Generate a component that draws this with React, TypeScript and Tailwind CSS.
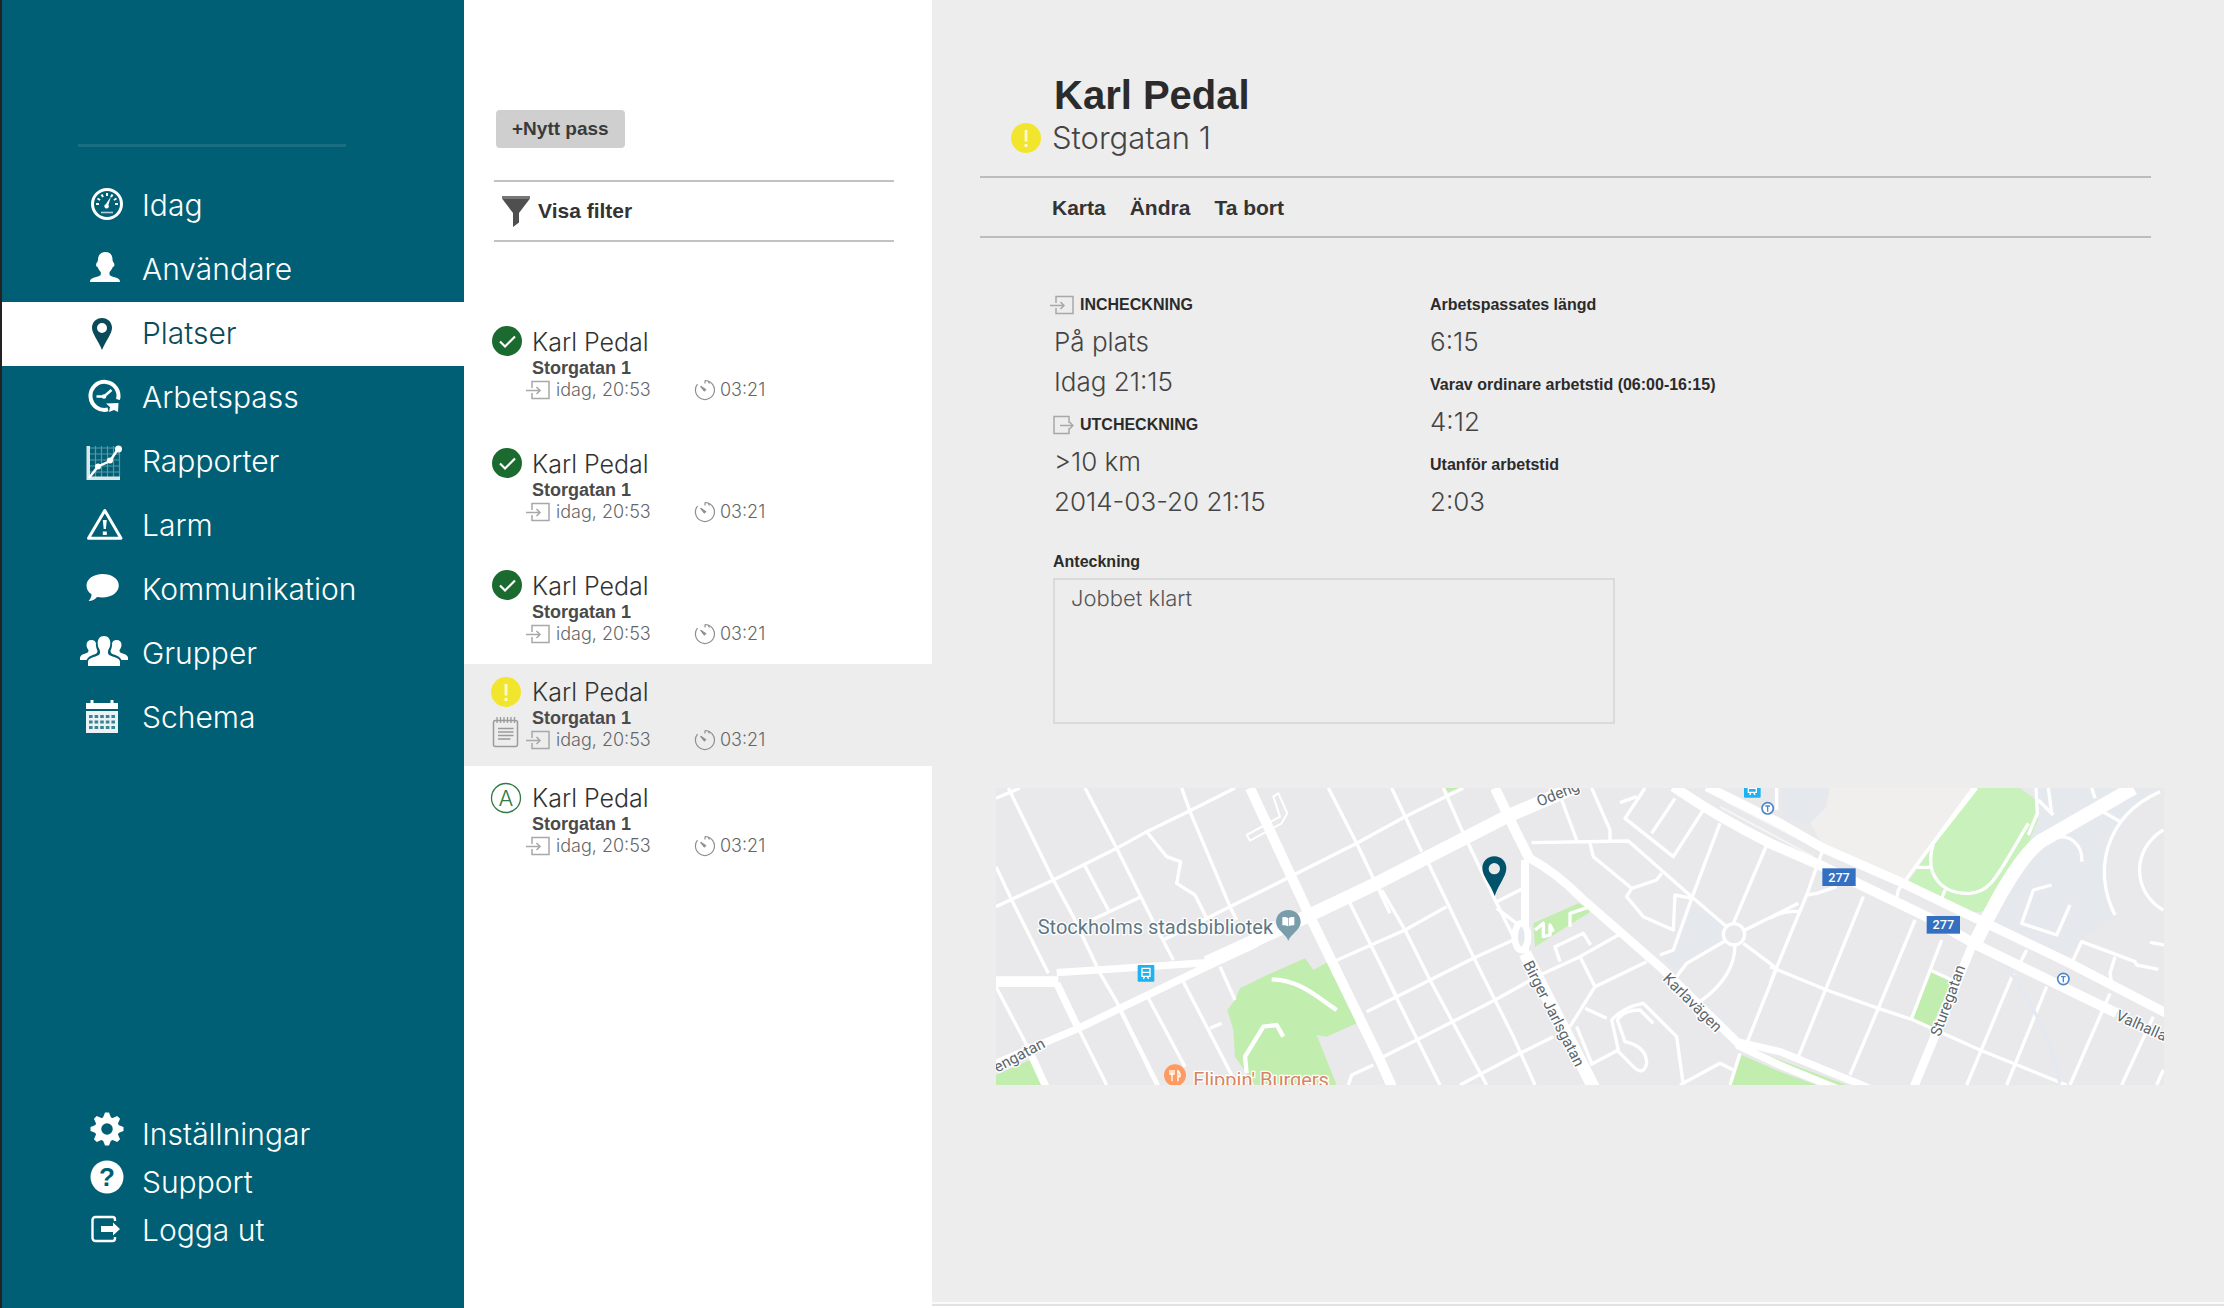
import { useState, type ReactNode } from "react";
import clsx from "clsx";

type Status = "done" | "alert" | "auto";

interface Shift {
  id: number;
  name: string;
  place: string;
  checkIn: string;
  duration: string;
  status: Status;
  hasNote?: boolean;
  spacing: string;
}

const shifts: Shift[] = [
  { id: 1, name: "Karl Pedal", place: "Storgatan 1", checkIn: "idag, 20:53", duration: "03:21", status: "done", spacing: "" },
  { id: 2, name: "Karl Pedal", place: "Storgatan 1", checkIn: "idag, 20:53", duration: "03:21", status: "done", spacing: "mt-5" },
  { id: 3, name: "Karl Pedal", place: "Storgatan 1", checkIn: "idag, 20:53", duration: "03:21", status: "done", spacing: "mt-5" },
  { id: 4, name: "Karl Pedal", place: "Storgatan 1", checkIn: "idag, 20:53", duration: "03:21", status: "alert", hasNote: true, spacing: "mt-1" },
  { id: 5, name: "Karl Pedal", place: "Storgatan 1", checkIn: "idag, 20:53", duration: "03:21", status: "auto", spacing: "mt-1" },
];

function NavIcon({ children }: { children: ReactNode }) {
  return (
    <svg viewBox="0 0 48 48" className="size-12 shrink-0" fill="currentColor" aria-hidden="true">
      {children}
    </svg>
  );
}

const gaugeTicks = [-90, -60, -30, 0, 30, 60, 90];

const mainNav = [
  {
    label: "Idag",
    icon: (
      <NavIcon>
        <circle cx="27" cy="22" r="14.5" fill="none" stroke="currentColor" strokeWidth="3" />
        {gaugeTicks.map((a) => (
          <rect key={a} x="26" y="11" width="2" height="3" transform={`rotate(${a} 27 22)`} />
        ))}
        <path d="M31 14.5 28.4 23a2.2 2.2 0 1 1-2.6-.8z" />
        <path d="M21 30.5h12" stroke="currentColor" strokeWidth="1.6" opacity=".7" />
      </NavIcon>
    ),
  },
  {
    label: "Användare",
    icon: (
      <NavIcon>
        <path d="M25.500 6c4.400 0 7 3 7 7.500 0 1.200.200 2 1.400 3.400.900 1.300.700 3.700-1.100 4-1 2.400-2.300 4-3.300 5v2.300c0 1.400 1.500 2 4.500 2.800 3.600 1 6 2 6 5H10c0-3 2.400-4 6-5 3-.8 4.800-1.400 4.800-2.800v-2.300c-1-1-2.300-2.600-3.200-5-1.700-.3-1.900-2.700-1-4 1.200-1.400 1.400-2.200 1.400-3.400 0-4.500 3-7.500 7.500-7.500z" />
      </NavIcon>
    ),
  },
  {
    label: "Platser",
    icon: (
      <NavIcon>
        <path
          fillRule="evenodd"
          d="M22 8c-5.800 0-10 4.300-10 9.800C12 24 18 30 22 40c4-10 10-16 10-22.200C32 12.300 27.800 8 22 8zm0 5a5 5 0 1 1 0 10 5 5 0 0 1 0-10z"
        />
      </NavIcon>
    ),
  },
  {
    label: "Arbetspass",
    icon: (
      <NavIcon>
        <path d="M38 25.500A14 14 0 1 0 28 35.400" fill="none" stroke="currentColor" strokeWidth="4" />
        <path d="M26 29.500 38.500 29 38 38 34 36 29 38 30 33z" />
        <path d="M16.500 22.500H24l7.500-6.500" fill="none" stroke="currentColor" strokeWidth="2.600" />
        <circle cx="24" cy="22.500" r="2.300" />
      </NavIcon>
    ),
  },
  {
    label: "Rapporter",
    icon: (
      <NavIcon>
        <path
          d="M15.500 8v31M21.500 8v31M27.500 8v31M33.500 8v31M39.500 12v27M9 10h31M9 16h31M9 22h31M9 28h31M9 34h31"
          stroke="currentColor"
          strokeWidth="1.200"
          opacity=".35"
        />
        <path d="M6.500 8v34H40v-3.500H10V8z" opacity=".85" />
        <path d="M9 40 18 28.500 30 23 38 11" fill="none" stroke="currentColor" strokeWidth="2.400" />
        <circle cx="18" cy="28.500" r="3" />
        <circle cx="30" cy="22.500" r="3" />
        <circle cx="38.500" cy="11" r="3.500" />
      </NavIcon>
    ),
  },
  {
    label: "Larm",
    icon: (
      <NavIcon>
        <path d="M24.800 8.500 41 36.200H8.500z" fill="none" stroke="currentColor" strokeWidth="3" strokeLinejoin="round" />
        <path d="M22.800 18h4l-.9 9h-2.200zM22.800 29.500h4v3.500h-4z" />
      </NavIcon>
    ),
  },
  {
    label: "Kommunikation",
    icon: (
      <NavIcon>
        <path d="M22.500 8C13.500 8 6.500 13 6.500 19.500c0 4 2 6.800 5 8.800 0 2.700-1 4.700-3 6.700 3.500 0 6.500-1.500 8.500-4 1.700.3 3.500.500 5.500.500 9 0 16.300-5 16.300-12S31.500 8 22.500 8z" />
      </NavIcon>
    ),
  },
  {
    label: "Grupper",
    icon: (
      <NavIcon>
        <path d="M24 6c4 0 6.300 2.800 6.300 7 0 2-.3 4-1.300 5.600-.8 1.300-1 2.400-1 3.700 0 2.200 1 3 4.500 4.200C37 28 40 29 40 32v4H8v-4c0-3 3-4 7.500-5.500C19 25.300 20 24.500 20 22.300c0-1.300-.2-2.400-1-3.700-1-1.600-1.300-3.600-1.300-5.600 0-4.200 2.300-7 6.300-7z" />
        <path d="M11.500 10c2.300 0 3.900 1 4.400 3-.2 3.300.7 6 1.600 8-.2 2-1 2.700-3.500 3.600-3.500 1.200-6 2.400-7.500 5.400H0v-2.500C.500 25 3 24.500 6 23.300c2-.8 2.700-1.600 2.500-3.300-1.400-1.700-2-3.500-2-5.300 0-3 2-4.700 5-4.700z" />
        <path d="M36.500 10c-2.300 0-3.900 1-4.400 3 .2 3.300-.7 6-1.600 8 .2 2 1 2.700 3.500 3.600 3.500 1.200 6 2.400 7.500 5.400H48v-2.500c-.5-2.500-3-3-6-4.200-2-.8-2.700-1.600-2.500-3.300 1.400-1.700 2-3.500 2-5.300 0-3-2-4.700-5-4.700z" />
      </NavIcon>
    ),
  },
  {
    label: "Schema",
    icon: (
      <NavIcon>
        <path d="M10.500 6h3v5h-3zM30.500 6h3v5h-3z" />
        <path d="M6 9h32v6H6z" />
        <path d="M6 17h32v22H6z" opacity=".92" />
        <path
          d="M9 22.500h26M9 28h26M9 33.500h26"
          stroke="#005f74"
          strokeWidth="3.200"
          strokeDasharray="3.600 2"
          opacity=".75"
        />
      </NavIcon>
    ),
  },
];

const gearTeeth = [0, 45, 90, 135, 180, 225, 270, 315];

const footerNav = [
  {
    label: "Inställningar",
    icon: (
      <NavIcon>
        {gearTeeth.map((a) => (
          <path key={a} d="M22.500 9 25 2.500h4L31.500 9z" transform={`rotate(${a} 27 19)`} />
        ))}
        <circle cx="27" cy="19" r="9" fill="none" stroke="currentColor" strokeWidth="6.500" />
      </NavIcon>
    ),
  },
  {
    label: "Support",
    icon: (
      <NavIcon>
        <circle cx="27" cy="19" r="16.500" />
        <text x="27" y="28" textAnchor="middle" fill="#005f74" className="font-['Liberation_Sans',sans-serif] text-[26px] font-bold">
          ?
        </text>
      </NavIcon>
    ),
  },
  {
    label: "Logga ut",
    icon: (
      <NavIcon>
        <path
          d="M35 15v-1.500a2.500 2.500 0 0 0-2.500-2.500h-17a3 3 0 0 0-3 3v18a3 3 0 0 0 3 3h17a2.500 2.500 0 0 0 2.500-2.500V31"
          fill="none"
          stroke="currentColor"
          strokeWidth="2.400"
        />
        <path d="M21 20h12v-3.500l7 6.500-7 6.500V26H21z" />
      </NavIcon>
    ),
  },
];

function CheckInIcon() {
  return (
    <svg viewBox="0 0 24 20" className="h-5 w-6 shrink-0 text-[#a8a8a8]" fill="none" stroke="currentColor" strokeWidth="1.500" aria-hidden="true">
      <path d="M6 8V1.500h17v17H6V13M0 10.500h14M10.500 7l3.500 3.500L10.500 14" />
    </svg>
  );
}

function CheckOutIcon() {
  return (
    <svg viewBox="0 0 24 20" className="h-5 w-6 shrink-0 text-[#a8a8a8]" fill="none" stroke="currentColor" strokeWidth="1.500" aria-hidden="true">
      <path d="M19 8V1.500H4v17h15V13M10 10.500h13M19.500 7l3.500 3.500-3.500 3.500" />
    </svg>
  );
}

function TimerIcon() {
  return (
    <svg viewBox="0 0 22 22" className="size-[22px] shrink-0 text-[#8f8f8f]" fill="none" stroke="currentColor" strokeWidth="1.200" aria-hidden="true">
      <path d="M11 1.500v3M11 1.500a9.500 9.500 0 1 1-7.500 3.600M14 2l1.500 2.500M10.800 11.800 6.500 7.200" />
      <path d="M7 7.500l4.600 3-1.300 1.300z" fill="currentColor" />
    </svg>
  );
}

function NoteIcon() {
  return (
    <svg viewBox="0 0 28 32" className="h-8 w-7" fill="none" stroke="#9b9b9b" strokeWidth="1.500" aria-hidden="true">
      <rect x="1.500" y="4.500" width="24" height="26" rx="2" />
      <path d="M5 1v6M8.500 1v6M12 1v6M15.500 1v6M19 1v6M22.500 1v6" strokeWidth="1.300" />
      <path d="M6 12.500h15.500M6 16h15.500M6 19.500h15.500M6 23h12.500" strokeWidth="1.600" />
    </svg>
  );
}

function StatusBadge({ status }: { status: Status }) {
  return (
    <svg viewBox="0 0 32 32" className="size-8 shrink-0" fill="none" aria-hidden="true">
      {status === "done" && (
        <>
          <circle cx="17" cy="15" r="15" fill="#1b6a2f" />
          <path d="M10 15.500l5 5L25 10.500" stroke="#fff" strokeWidth="2.200" />
        </>
      )}
      {status === "alert" && (
        <>
          <circle cx="16" cy="16" r="15" fill="#f2e52d" />
          <path d="M16 8v11.500M16 22v3" stroke="#fffbd0" strokeWidth="2.800" />
        </>
      )}
      {status === "auto" && (
        <>
          <circle cx="16" cy="16" r="14.500" stroke="#2f7a45" strokeWidth="1.300" />
          <text x="16" y="24" textAnchor="middle" fill="#2f7a45" className="font-['Inter',sans-serif] text-[22px] font-light">
            A
          </text>
        </>
      )}
    </svg>
  );
}

function ShiftRow({ shift, selected, onSelect }: { shift: Shift; selected: boolean; onSelect: () => void }) {
  return (
    <li className={shift.spacing}>
      <button
        type="button"
        onClick={onSelect}
        className={clsx("flex w-full gap-2.5 pt-3 pb-3.5 pl-[26px] text-left", selected && "bg-[#ededed]")}
      >
        <span className="flex w-8 flex-col items-center gap-2">
          <StatusBadge status={shift.status} />
          {shift.hasNote && <NoteIcon />}
        </span>
        <span className="flex flex-col">
          <span className="font-['Inter',sans-serif] text-[25px] leading-8 font-light text-[#333]">{shift.name}</span>
          <span className="text-lg leading-5 font-bold text-[#4a4a4a]">{shift.place}</span>
          <span className="-ml-1.5 flex h-6 items-center font-['Inter',sans-serif] text-lg leading-6 font-light text-[#666]">
            <CheckInIcon />
            <span className="ml-1.5 w-[138px]">{shift.checkIn}</span>
            <TimerIcon />
            <span className="ml-1">{shift.duration}</span>
          </span>
        </span>
      </button>
    </li>
  );
}

function Field({ label, icon, values }: { label: string; icon?: ReactNode; values: string[] }) {
  return (
    <div>
      <dt className="flex h-9 items-center pt-0.5 text-base font-bold text-[#2b2b2b]">
        {icon && <span className="mr-1.5 -ml-1 w-6">{icon}</span>}
        {label}
      </dt>
      {values.map((v) => (
        <dd key={v} className="font-['Inter',sans-serif] text-[26px] leading-10 font-light text-[#444]">
          {v}
        </dd>
      ))}
    </div>
  );
}

function CityMap() {
  return (
    <svg
      viewBox="18 24 3504 891"
      preserveAspectRatio="xMidYMid slice"
      className="block h-[297px] w-full bg-[#e9e9eb] font-['Roboto',sans-serif]"
      fill="none"
      stroke="#fff"
      role="img"
      aria-label="Karta"
    >
      {/* areas */}
      <g stroke="none">
        <g fill="#c1edae">
          <path d="M820 590 945 535 970 570 1015 545 1100 730 1010 770 980 765 1040 915H795L735 830 730 750 712 690 735 660 750 625z" />
          <path d="M18 885 120 840 155 915H18z" />
          <path d="M1630 430 1765 370 1810 390 1730 440 1635 500z" />
          <path d="M1365 24H1410L1375 36z" />
          <path d="M2255 825 2370 875 2480 915H2225zM2270 803 2570 915H2530L2340 845z" />
          <path d="M2825 572 2885 600 2825 742 2765 715z" />
          <path d="M3310 24H3370L3318 42z" />
        </g>
        <g fill="#e5e9ed">
          <path d="M2110 370 2200 430V490L2060 570 2010 530 2050 510z" />
          <path d="M2380 24H2520L2500 100 2460 135 2380 115z" />
          <path d="M3100 200 3140 140 3140 24H3510C3380 80 3320 240 3375 410L3270 480 3230 545 3000 430 3050 290z" />
        </g>
        <path fill="#f0efee" d="M2520 24H2950L2740 310 2500 200 2460 130 2510 80z" />
        <path fill="#c8f1bb" d="M2950 24H3090L3138 60 3145 120 3115 190 3020 340 2985 392Q2950 402 2925 392L2755 305z" />
      </g>

      {/* small streets */}
      <g strokeWidth="10" strokeLinejoin="round">
        <path d="M55 24 190 300 250 410 330 580 380 665 505 915M18 260 65 360 175 580M18 620 110 795M285 24 380 205 490 425 550 540M580 605 725 885M470 645 585 860M575 24 600 95 720 380 740 420M1015 24 1100 190 1200 400" />
        <path d="M18 380 190 300 380 205 470 155 600 92 735 24M18 55 90 24M520 480 720 380 905 288 1100 190 1245 110 1420 24M470 155 530 230 572 245 560 310 615 345 648 410M285 258 355 390M310 418 450 352" />
        <path d="M1080 370 1220 650M1030 545 1245 450 1370 380M1130 695 1320 600 1450 535 1570 480M1075 915 1085 885 1150 855M690 560 735 660M660 745 695 730" />
        <path d="M1205 24 1295 215M1315 250 1450 530 1570 770 1635 915M1360 24 1420 160 1520 370 1570 470M1175 330 1245 450 1320 600 1490 915M1180 570 1220 655 1350 915" />
        <path d="M1180 830 1280 780 1515 660 1650 585 1770 530 1885 465M1410 915 1590 820 1690 770M1520 365 1600 325M1520 385 1580 430" />
        <path d="M1715 60 1760 180M1805 24 1860 150V180M1625 188 1915 183 2105 350 2210 440M1800 190 1810 230 1925 325 1910 350 1960 410 2050 450 2055 345 2105 355M1925 325 2000 300 2015 280" />
        <path d="M1965 24 1905 115 2050 230 2140 90M2055 55 1985 160M1890 68 1940 50M2190 130 2105 355 2050 510 2010 525M2330 195 2230 430M2265 450 2425 370M2260 490 2360 565 2270 790M2210 480 2090 550 2060 590M2235 495Q2235 590 2130 665" />
        <path d="M1770 530 1815 620 1970 545M1815 620 1740 740M1785 685 1850 715M1710 545 1695 500 1780 460 1802 495M1800 855 1885 810 1865 720Q1900 680 1960 670L2060 770 2080 915M1990 730 1950 690Q1900 690 1882 720L1905 785Q1970 800 1970 850 1960 890 1930 860L1885 815" />
        <path d="M2070 915 2190 850 2230 870M2250 820 2220 915M1760 740 1805 850" />
        <path d="M2500 205 2450 345 2340 610M2450 345 2480 340 2540 320M2340 415Q2380 390 2425 395M2620 350 2425 830M2775 420 2665 685 2580 885M2855 480 2765 715M2340 560 2510 630 2665 685 2770 720 2970 810 3230 915" />
        <path d="M3070 580 2930 915M3170 620 3050 915M3110 510 3090 550M3360 640 3240 915M3490 710 3395 915M3520 870 3500 915M3245 550 3275 485 3435 545 3440 555 3505 568M3375 530 3360 580 3365 610M3480 487 3525 495" />
        <path d="M3510 35C3340 110 3310 280 3375 405M3520 150C3420 210 3430 340 3520 390M3185 315 3130 330 3095 430 3200 465 3240 375M3180 180C3240 150 3280 200 3275 245M3305 24 3315 55M3175 24 3185 100M3330 90 3390 125M2825 572 2885 600" />
        <path d="M2950 24 2725 330 2720 355M2960 24 2830 190C2800 290 2860 340 2930 340 3000 345 3020 290 3115 130M3138 24 3142 100 3115 165M2780 262H2820M2865 330 2855 355M3145 60 3190 105" />
        <path d="M1635 450 1660 430 1660 470 1680 465 1680 435 1690 455M1740 440 1740 400 1800 380M2360 24V90" />
        <path d="M845 598C930 600 980 650 1040 690M770 880 765 830 820 740 860 735 880 770" strokeWidth="13" />
        <path d="M850 50 865 40 892 100 875 130 780 182 770 165 870 110z" strokeWidth="6" />
        <circle cx="2232" cy="463" r="32" fill="#e9e9eb" />
      </g>
      <path d="M3000 500Q3170 700 3210 910" stroke="#e4e8f1" strokeWidth="10" />
      <path d="M2190 80 2470 230M2200 60 2480 205M2210 110 2460 240" stroke="#f6f6f8" strokeWidth="5" />

      {/* main roads */}
      <g strokeLinejoin="round">
        <path d="M780 24 960 410 1170 840 1210 930" strokeWidth="30" />
        <path d="M650 548 960 405 1170 305 1550 110 1750 24" strokeWidth="40" />
        <path d="M18 605H205" strokeWidth="32" />
        <path d="M200 578 430 563 650 548M18 850 265 745 650 560 800 490M200 610 265 745M110 795 170 925" strokeWidth="22" />
        <path d="M265 745 350 915M390 690 500 915" strokeWidth="10" />
        <path d="M1515 24 1570 140 1620 240" strokeWidth="30" />
        <path d="M1605 240V520" strokeWidth="24" />
        <ellipse cx="1594" cy="470" rx="20" ry="40" strokeWidth="20" fill="#e3e8ec" />
        <path d="M1605 520 1820 940" strokeWidth="38" />
        <path d="M1620 235Q1700 280 1770 350L2010 560 2250 795" strokeWidth="26" />
        <path d="M2240 795 2380 860 2540 925M2240 785 2370 815 2640 925" strokeWidth="22" />
        <path d="M2050 20Q2180 110 2340 190L2500 260 2810 410 2960 495 3380 700" strokeWidth="30" />
        <path d="M2150 20 2370 130 2500 205 2740 310 3000 435 3240 550 3530 700" strokeWidth="28" />
        <path d="M3430 24 3150 185Q3080 240 2980 440L2960 480" strokeWidth="42" />
        <path d="M2945 500 2900 610 2770 925" strokeWidth="26" />
      </g>

      {/* labels */}
      <g stroke="#fff" strokeWidth="8" paintOrder="stroke" fill="#5c666c" fontSize="46">
        <text x="143" y="461" fontSize="60" fill="#5f7885">
          Stockholms stadsbibliotek
        </text>
        <text x="610" y="921" fontSize="60" fill="#d78461">
          Flippin' Burgers
        </text>
        <text transform="translate(22 878) rotate(-28)">engatan</text>
        <text transform="translate(1648 80) rotate(-22)">Odeng</text>
        <text transform="translate(1598 552) rotate(63)">Birger Jarlsgatan</text>
        <text transform="translate(2016 598) rotate(45)">Karlavägen</text>
        <text transform="translate(2850 772) rotate(-70)">Sturegatan</text>
        <text transform="translate(3374 718) rotate(24)">Valhalla</text>
      </g>

      <g stroke="none">
        <path fill="#7a9dac" d="M895 390c-22 0-37 16-37 36 0 24 28 34 37 56 9-22 37-32 37-56 0-20-15-36-37-36z" />
        <path fill="#fff" d="M877 412q9-3 17 2v25q-8-5-17-3zM913 412q-9-3-17 2v25q8-5 17-3z" />
        <circle cx="555" cy="886" r="33" fill="#ff9b62" />
        <path d="M546 870v34M564 870v34M540 870v12h12v-12M562 872q10 4 8 18h-6" stroke="#fff" strokeWidth="4" />
        {[
          [443, 555],
          [2262, 3],
        ].map(([x, y]) => (
          <g key={x}>
            <rect x={x} y={y} width="50" height="50" rx="3" fill="#1cb3f0" />
            <path d={`M${x + 13} ${y + 10}h24v24h-24zM${x + 13} ${y + 22}h24M${x + 17} ${y + 42}l4-8M${x + 33} ${y + 42}l-4-8`} stroke="#fff" strokeWidth="4" />
          </g>
        ))}
        {[
          [2333, 85],
          [3220, 597],
        ].map(([x, y]) => (
          <g key={x}>
            <circle cx={x} cy={y} r="17" fill="#fff" stroke="#4d86c9" strokeWidth="5" />
            <path d={`M${x - 7} ${y - 7}h14M${x} ${y - 7}v17`} stroke="#4d86c9" strokeWidth="4" />
          </g>
        ))}
        {[
          [2497, 265],
          [2810, 408],
        ].map(([x, y]) => (
          <g key={x}>
            <rect x={x} y={y} width="100" height="53" fill="#3370c0" />
            <text x={x + 50} y={y + 40} textAnchor="middle" fill="#fff" fontSize="38" fontWeight="500">
              277
            </text>
          </g>
        ))}
        <path
          fill="#00536a"
          fillRule="evenodd"
          d="M1513 229c-21 0-36 15-36 36 0 24 26 50 37 83 11-33 35-59 35-83 0-21-15-36-36-36zm0 20a17 17 0 1 1 0 34 17 17 0 0 1 0-34z"
        />
      </g>
    </svg>
  );
}

function Sidebar() {
  const [active, setActive] = useState("Platser");

  return (
    <aside className="flex w-[464px] shrink-0 flex-col border-l-2 border-[#222] bg-[#005f74] font-['Inter',sans-serif] text-3xl font-light text-white">
      <div className="mt-36 mr-[118px] ml-19 h-[3px] bg-[#1a6e81]" />
      <nav className="mt-[27px]">
        {mainNav.map(({ label, icon }) => (
          <a
            key={label}
            href="#"
            onClick={() => setActive(label)}
            className={clsx("flex h-16 items-center gap-3.5 pl-[78px]", active === label && "bg-white text-[#0a4a5a]")}
          >
            {icon}
            <span className="pb-0.5">{label}</span>
          </a>
        ))}
      </nav>
      <nav className="mt-auto mb-[54px]">
        {footerNav.map(({ label, icon }) => (
          <a key={label} href="#" className="flex h-12 items-center gap-3.5 pl-[78px]">
            {icon}
            <span>{label}</span>
          </a>
        ))}
      </nav>
    </aside>
  );
}

function ShiftList() {
  const [selected, setSelected] = useState(4);

  return (
    <section className="w-[468px] shrink-0 bg-white pt-[110px]">
      <div className="mr-[38px] ml-[30px]">
        <button type="button" className="ml-0.5 h-[38px] rounded bg-[#cfcfcf] px-4 text-[19px] font-bold text-[#3a3a3a]">
          +Nytt pass
        </button>
        <button
          type="button"
          className="mt-8 flex h-[62px] w-full items-center gap-2 border-y-2 border-[#c2c2c2] pl-2 text-[21px] font-bold text-[#333]"
        >
          <svg viewBox="0 0 28 32" className="h-8 w-7" aria-hidden="true">
            <path d="M0 1h28v2.500L17 18v9.500L11 32V18L0 3.500z" fill="#4f4f4f" />
            <path d="M0 1h28v3H0z" fill="#777" />
          </svg>
          Visa filter
        </button>
      </div>
      <ul className="mt-[72px]">
        {shifts.map((s) => (
          <ShiftRow key={s.id} shift={s} selected={s.id === selected} onSelect={() => setSelected(s.id)} />
        ))}
      </ul>
    </section>
  );
}

function ShiftDetail() {
  return (
    <main className="flex min-w-0 flex-1 flex-col border-b-2 border-white bg-[#ededed]">
      <header className="mt-[70px] ml-[78px]">
        <h1 className="ml-11 text-[40px] leading-[50px] font-bold text-[#2b2b2b]">Karl Pedal</h1>
        <p className="flex items-center gap-2.5 font-['Inter',sans-serif] text-[31px] leading-9 font-light text-[#444]">
          <span className="w-8">
            <StatusBadge status="alert" />
          </span>
          Storgatan 1
        </p>
      </header>

      <div className="mt-5 mr-[73px] ml-12 flex h-[62px] items-center gap-6 border-y-2 border-[#bdbdbd] pt-0.5 pl-[72px] text-[21px] font-bold text-[#333]">
        <button type="button">Karta</button>
        <button type="button">Ändra</button>
        <button type="button">Ta bort</button>
      </div>

      <div className="mt-12 ml-[122px] flex">
        <dl className="flex w-[376px] flex-col gap-1">
          <Field label="INCHECKNING" icon={<CheckInIcon />} values={["På plats", "Idag 21:15"]} />
          <Field label="UTCHECKNING" icon={<CheckOutIcon />} values={[">10 km", "2014-03-20 21:15"]} />
        </dl>
        <dl className="flex flex-col gap-1">
          <Field label="Arbetspassates längd" values={["6:15"]} />
          <Field label="Varav ordinare arbetstid (06:00-16:15)" values={["4:12"]} />
          <Field label="Utanför arbetstid" values={["2:03"]} />
        </dl>
      </div>

      <div className="mt-7 ml-[121px] flex flex-col">
        <label htmlFor="note" className="text-base leading-6 font-bold text-[#2b2b2b]">
          Anteckning
        </label>
        <textarea
          id="note"
          defaultValue="Jobbet klart"
          className="mt-1 h-[146px] w-[562px] resize-none border-2 border-[#dadada] px-4 py-1 font-['Inter',sans-serif] text-[22px] leading-7 font-light text-[#555] outline-none"
        />
      </div>

      <div className="mt-16 mr-15 ml-16">
        <CityMap />
      </div>
      <div className="mt-auto border-t-2 border-[#fafafa] bg-[#e2e2e2] pt-0.5" />
    </main>
  );
}

export default function App() {
  return (
    <div className="flex min-h-screen bg-white font-['Liberation_Sans',Arial,sans-serif]">
      <Sidebar />
      <ShiftList />
      <ShiftDetail />
    </div>
  );
}
